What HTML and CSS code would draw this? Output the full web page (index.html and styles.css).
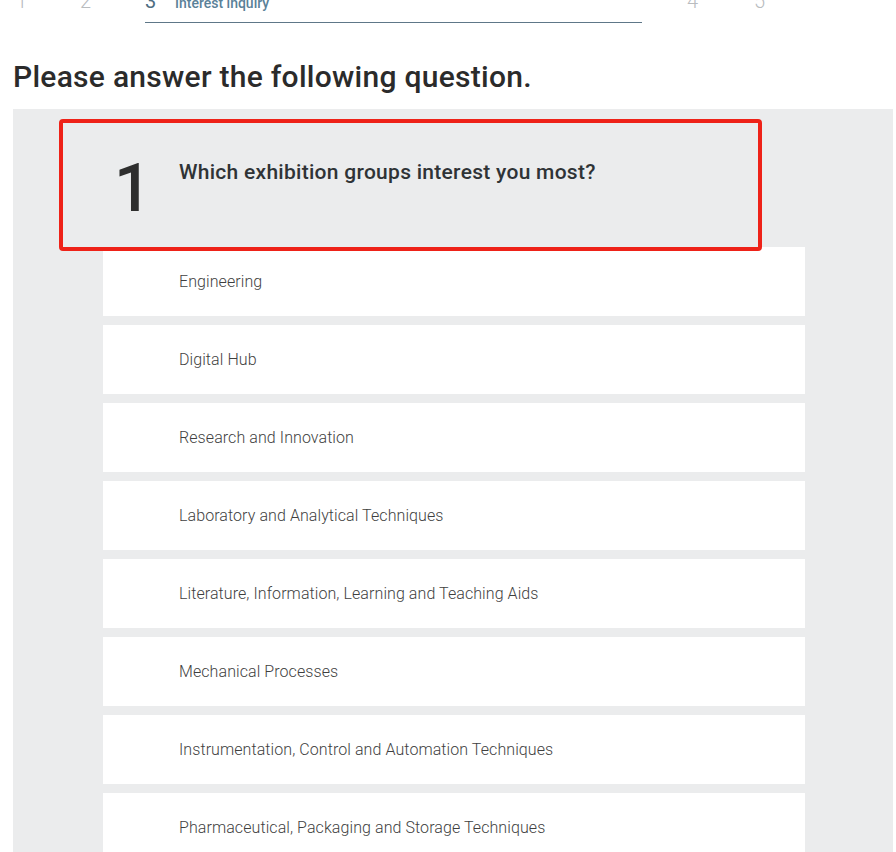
FILE: index.html
```html
<!DOCTYPE html>
<html lang="en">
<head>
<meta charset="utf-8">
<title>Interest inquiry</title>
<link rel="stylesheet" href="styles.css">
</head>
<body>
<nav class="steps">
  <div class="step step-1">1</div>
  <div class="step step-2">2</div>
  <div class="step step-active"><span class="step-num">3</span><span class="step-label">Interest inquiry</span></div>
  <div class="step step-4">4</div>
  <div class="step step-5">5</div>
</nav>
<h1 class="title">Please answer the following question.</h1>
<section class="panel">
  <div class="question">
    <div class="q-num">1</div>
    <div class="q-text">Which exhibition groups interest you most?</div>
  </div>
  <div class="highlight"></div>
  <ul class="options">
    <li class="option">Engineering</li>
    <li class="option">Digital Hub</li>
    <li class="option">Research and Innovation</li>
    <li class="option">Laboratory and Analytical Techniques</li>
    <li class="option">Literature, Information, Learning and Teaching Aids</li>
    <li class="option">Mechanical Processes</li>
    <li class="option">Instrumentation, Control and Automation Techniques</li>
    <li class="option">Pharmaceutical, Packaging and Storage Techniques</li>
  </ul>
</section>
</body>
</html>
```
FILE: styles.css
```css
html, body {
  margin: 0;
  padding: 0;
  background: #ffffff;
  font-family: Roboto, "Liberation Sans", Arial, sans-serif;
  overflow: hidden;
}

.steps {
  display: flex;
  align-items: flex-start;
  margin-top: -11px;
  padding-left: 16px;
  height: 33px;
}

.step {
  font-size: 20px;
  font-weight: 300;
  line-height: 24px;
  color: #b9bcbf;
}

.step-1 { width: 64px; }
.step-2 { width: 65px; }
.step-4 { width: 67px; margin-left: 45px; }
.step-5 { width: 67px; }

.step-active {
  width: 497px;
  display: flex;
  align-items: baseline;
  padding-bottom: 7px;
  border-bottom: 1.5px solid #5e7788;
}

.step-num {
  color: #4f6e82;
  font-weight: 400;
  width: 30px;
}

.step-label {
  font-size: 14px;
  font-weight: 500;
  color: #5a8198;
}

.title {
  margin: 37px 0 0 13px;
  font-size: 30px;
  font-weight: 500;
  letter-spacing: 0.27px;
  line-height: 36px;
  color: #2b2b2b;
  height: 50px;
}

.panel {
  position: relative;
  margin-left: 13px;
  width: 880px;
  background: #ebeced;
  padding: 0 88px 0 90px;
  box-sizing: border-box;
  min-height: 760px;
}

.question {
  display: flex;
  height: 138px;
}

.q-num {
  width: 76px;
  padding-left: 11px;
  box-sizing: border-box;
  font-size: 66px;
  font-weight: 500;
  line-height: 66px;
  color: #2e2e2e;
  padding-top: 47px;
}

.q-text {
  padding-top: 50px;
  font-size: 21px;
  font-weight: 500;
  letter-spacing: 0.28px;
  line-height: 26px;
  color: #2f3336;
}

.highlight {
  position: absolute;
  left: 46px;
  top: 10px;
  width: 703px;
  height: 132px;
  box-sizing: border-box;
  border: 4px solid #ee2218;
  border-radius: 4px;
  pointer-events: none;
}

.options {
  list-style: none;
  margin: 0;
  padding: 0;
  display: flex;
  flex-direction: column;
  gap: 9px;
}

.option {
  height: 69px;
  background: #ffffff;
  display: flex;
  align-items: center;
  padding-left: 76px;
  font-size: 16px;
  font-weight: 300;
  letter-spacing: 0.08px;
  color: #3f3f3f;
}
```
